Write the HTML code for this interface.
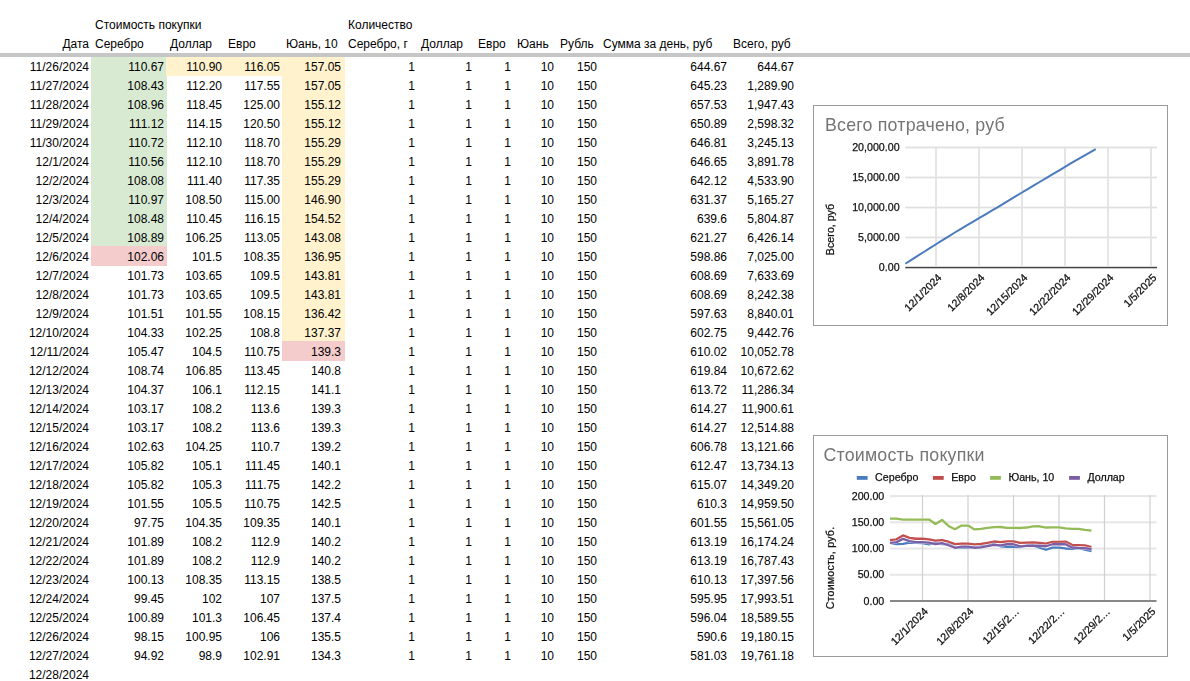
<!DOCTYPE html>
<html><head><meta charset="utf-8">
<style>
html,body{margin:0;padding:0;background:#fff;width:1190px;height:681px;overflow:hidden;position:relative}
body{font-family:"Liberation Sans",sans-serif;}
.b{position:absolute}
.t{position:absolute;font-size:12px;line-height:19px;color:#000;white-space:nowrap}
.r{text-align:right}
</style></head><body>
<div class="b" style="left:91px;top:57px;width:76px;height:190px;background:#d9ead3"></div>
<div class="b" style="left:91px;top:246px;width:76px;height:20px;background:#f4cccc"></div>
<div class="b" style="left:166px;top:57px;width:117px;height:19px;background:#fff2cc"></div>
<div class="b" style="left:282px;top:57px;width:63px;height:285px;background:#fff2cc"></div>
<div class="b" style="left:282px;top:341px;width:63px;height:20px;background:#f4cccc"></div>
<div class="b" style="left:0px;top:53px;width:1190px;height:4px;background:#c6c6c6"></div>
<div class="t" style="left:95px;top:16px">Стоимость покупки</div>
<div class="t" style="left:348px;top:16px">Количество</div>
<div class="t r" style="right:1101px;top:35px">Дата</div>
<div class="t" style="left:95px;top:35px">Серебро</div>
<div class="t" style="left:170px;top:35px">Доллар</div>
<div class="t" style="left:228px;top:35px">Евро</div>
<div class="t" style="left:286px;top:35px">Юань, 10</div>
<div class="t" style="left:348px;top:35px">Серебро, г</div>
<div class="t" style="left:421px;top:35px">Доллар</div>
<div class="t" style="left:478px;top:35px">Евро</div>
<div class="t" style="left:517px;top:35px">Юань</div>
<div class="t" style="left:560px;top:35px">Рубль</div>
<div class="t" style="left:603px;top:35px">Сумма за день, руб</div>
<div class="t" style="left:733px;top:35px">Всего, руб</div>
<div class="t r" style="right:1101px;top:58px">11/26/2024</div>
<div class="t r" style="right:1026px;top:58px">110.67</div>
<div class="t r" style="right:968px;top:58px">110.90</div>
<div class="t r" style="right:910px;top:58px">116.05</div>
<div class="t r" style="right:849px;top:58px">157.05</div>
<div class="t r" style="right:775px;top:58px">1</div>
<div class="t r" style="right:718px;top:58px">1</div>
<div class="t r" style="right:679px;top:58px">1</div>
<div class="t r" style="right:636px;top:58px">10</div>
<div class="t r" style="right:593px;top:58px">150</div>
<div class="t r" style="right:463px;top:58px">644.67</div>
<div class="t r" style="right:396px;top:58px">644.67</div>
<div class="t r" style="right:1101px;top:77px">11/27/2024</div>
<div class="t r" style="right:1026px;top:77px">108.43</div>
<div class="t r" style="right:968px;top:77px">112.20</div>
<div class="t r" style="right:910px;top:77px">117.55</div>
<div class="t r" style="right:849px;top:77px">157.05</div>
<div class="t r" style="right:775px;top:77px">1</div>
<div class="t r" style="right:718px;top:77px">1</div>
<div class="t r" style="right:679px;top:77px">1</div>
<div class="t r" style="right:636px;top:77px">10</div>
<div class="t r" style="right:593px;top:77px">150</div>
<div class="t r" style="right:463px;top:77px">645.23</div>
<div class="t r" style="right:396px;top:77px">1,289.90</div>
<div class="t r" style="right:1101px;top:96px">11/28/2024</div>
<div class="t r" style="right:1026px;top:96px">108.96</div>
<div class="t r" style="right:968px;top:96px">118.45</div>
<div class="t r" style="right:910px;top:96px">125.00</div>
<div class="t r" style="right:849px;top:96px">155.12</div>
<div class="t r" style="right:775px;top:96px">1</div>
<div class="t r" style="right:718px;top:96px">1</div>
<div class="t r" style="right:679px;top:96px">1</div>
<div class="t r" style="right:636px;top:96px">10</div>
<div class="t r" style="right:593px;top:96px">150</div>
<div class="t r" style="right:463px;top:96px">657.53</div>
<div class="t r" style="right:396px;top:96px">1,947.43</div>
<div class="t r" style="right:1101px;top:115px">11/29/2024</div>
<div class="t r" style="right:1026px;top:115px">111.12</div>
<div class="t r" style="right:968px;top:115px">114.15</div>
<div class="t r" style="right:910px;top:115px">120.50</div>
<div class="t r" style="right:849px;top:115px">155.12</div>
<div class="t r" style="right:775px;top:115px">1</div>
<div class="t r" style="right:718px;top:115px">1</div>
<div class="t r" style="right:679px;top:115px">1</div>
<div class="t r" style="right:636px;top:115px">10</div>
<div class="t r" style="right:593px;top:115px">150</div>
<div class="t r" style="right:463px;top:115px">650.89</div>
<div class="t r" style="right:396px;top:115px">2,598.32</div>
<div class="t r" style="right:1101px;top:134px">11/30/2024</div>
<div class="t r" style="right:1026px;top:134px">110.72</div>
<div class="t r" style="right:968px;top:134px">112.10</div>
<div class="t r" style="right:910px;top:134px">118.70</div>
<div class="t r" style="right:849px;top:134px">155.29</div>
<div class="t r" style="right:775px;top:134px">1</div>
<div class="t r" style="right:718px;top:134px">1</div>
<div class="t r" style="right:679px;top:134px">1</div>
<div class="t r" style="right:636px;top:134px">10</div>
<div class="t r" style="right:593px;top:134px">150</div>
<div class="t r" style="right:463px;top:134px">646.81</div>
<div class="t r" style="right:396px;top:134px">3,245.13</div>
<div class="t r" style="right:1101px;top:153px">12/1/2024</div>
<div class="t r" style="right:1026px;top:153px">110.56</div>
<div class="t r" style="right:968px;top:153px">112.10</div>
<div class="t r" style="right:910px;top:153px">118.70</div>
<div class="t r" style="right:849px;top:153px">155.29</div>
<div class="t r" style="right:775px;top:153px">1</div>
<div class="t r" style="right:718px;top:153px">1</div>
<div class="t r" style="right:679px;top:153px">1</div>
<div class="t r" style="right:636px;top:153px">10</div>
<div class="t r" style="right:593px;top:153px">150</div>
<div class="t r" style="right:463px;top:153px">646.65</div>
<div class="t r" style="right:396px;top:153px">3,891.78</div>
<div class="t r" style="right:1101px;top:172px">12/2/2024</div>
<div class="t r" style="right:1026px;top:172px">108.08</div>
<div class="t r" style="right:968px;top:172px">111.40</div>
<div class="t r" style="right:910px;top:172px">117.35</div>
<div class="t r" style="right:849px;top:172px">155.29</div>
<div class="t r" style="right:775px;top:172px">1</div>
<div class="t r" style="right:718px;top:172px">1</div>
<div class="t r" style="right:679px;top:172px">1</div>
<div class="t r" style="right:636px;top:172px">10</div>
<div class="t r" style="right:593px;top:172px">150</div>
<div class="t r" style="right:463px;top:172px">642.12</div>
<div class="t r" style="right:396px;top:172px">4,533.90</div>
<div class="t r" style="right:1101px;top:191px">12/3/2024</div>
<div class="t r" style="right:1026px;top:191px">110.97</div>
<div class="t r" style="right:968px;top:191px">108.50</div>
<div class="t r" style="right:910px;top:191px">115.00</div>
<div class="t r" style="right:849px;top:191px">146.90</div>
<div class="t r" style="right:775px;top:191px">1</div>
<div class="t r" style="right:718px;top:191px">1</div>
<div class="t r" style="right:679px;top:191px">1</div>
<div class="t r" style="right:636px;top:191px">10</div>
<div class="t r" style="right:593px;top:191px">150</div>
<div class="t r" style="right:463px;top:191px">631.37</div>
<div class="t r" style="right:396px;top:191px">5,165.27</div>
<div class="t r" style="right:1101px;top:210px">12/4/2024</div>
<div class="t r" style="right:1026px;top:210px">108.48</div>
<div class="t r" style="right:968px;top:210px">110.45</div>
<div class="t r" style="right:910px;top:210px">116.15</div>
<div class="t r" style="right:849px;top:210px">154.52</div>
<div class="t r" style="right:775px;top:210px">1</div>
<div class="t r" style="right:718px;top:210px">1</div>
<div class="t r" style="right:679px;top:210px">1</div>
<div class="t r" style="right:636px;top:210px">10</div>
<div class="t r" style="right:593px;top:210px">150</div>
<div class="t r" style="right:463px;top:210px">639.6</div>
<div class="t r" style="right:396px;top:210px">5,804.87</div>
<div class="t r" style="right:1101px;top:229px">12/5/2024</div>
<div class="t r" style="right:1026px;top:229px">108.89</div>
<div class="t r" style="right:968px;top:229px">106.25</div>
<div class="t r" style="right:910px;top:229px">113.05</div>
<div class="t r" style="right:849px;top:229px">143.08</div>
<div class="t r" style="right:775px;top:229px">1</div>
<div class="t r" style="right:718px;top:229px">1</div>
<div class="t r" style="right:679px;top:229px">1</div>
<div class="t r" style="right:636px;top:229px">10</div>
<div class="t r" style="right:593px;top:229px">150</div>
<div class="t r" style="right:463px;top:229px">621.27</div>
<div class="t r" style="right:396px;top:229px">6,426.14</div>
<div class="t r" style="right:1101px;top:248px">12/6/2024</div>
<div class="t r" style="right:1026px;top:248px">102.06</div>
<div class="t r" style="right:968px;top:248px">101.5</div>
<div class="t r" style="right:910px;top:248px">108.35</div>
<div class="t r" style="right:849px;top:248px">136.95</div>
<div class="t r" style="right:775px;top:248px">1</div>
<div class="t r" style="right:718px;top:248px">1</div>
<div class="t r" style="right:679px;top:248px">1</div>
<div class="t r" style="right:636px;top:248px">10</div>
<div class="t r" style="right:593px;top:248px">150</div>
<div class="t r" style="right:463px;top:248px">598.86</div>
<div class="t r" style="right:396px;top:248px">7,025.00</div>
<div class="t r" style="right:1101px;top:267px">12/7/2024</div>
<div class="t r" style="right:1026px;top:267px">101.73</div>
<div class="t r" style="right:968px;top:267px">103.65</div>
<div class="t r" style="right:910px;top:267px">109.5</div>
<div class="t r" style="right:849px;top:267px">143.81</div>
<div class="t r" style="right:775px;top:267px">1</div>
<div class="t r" style="right:718px;top:267px">1</div>
<div class="t r" style="right:679px;top:267px">1</div>
<div class="t r" style="right:636px;top:267px">10</div>
<div class="t r" style="right:593px;top:267px">150</div>
<div class="t r" style="right:463px;top:267px">608.69</div>
<div class="t r" style="right:396px;top:267px">7,633.69</div>
<div class="t r" style="right:1101px;top:286px">12/8/2024</div>
<div class="t r" style="right:1026px;top:286px">101.73</div>
<div class="t r" style="right:968px;top:286px">103.65</div>
<div class="t r" style="right:910px;top:286px">109.5</div>
<div class="t r" style="right:849px;top:286px">143.81</div>
<div class="t r" style="right:775px;top:286px">1</div>
<div class="t r" style="right:718px;top:286px">1</div>
<div class="t r" style="right:679px;top:286px">1</div>
<div class="t r" style="right:636px;top:286px">10</div>
<div class="t r" style="right:593px;top:286px">150</div>
<div class="t r" style="right:463px;top:286px">608.69</div>
<div class="t r" style="right:396px;top:286px">8,242.38</div>
<div class="t r" style="right:1101px;top:305px">12/9/2024</div>
<div class="t r" style="right:1026px;top:305px">101.51</div>
<div class="t r" style="right:968px;top:305px">101.55</div>
<div class="t r" style="right:910px;top:305px">108.15</div>
<div class="t r" style="right:849px;top:305px">136.42</div>
<div class="t r" style="right:775px;top:305px">1</div>
<div class="t r" style="right:718px;top:305px">1</div>
<div class="t r" style="right:679px;top:305px">1</div>
<div class="t r" style="right:636px;top:305px">10</div>
<div class="t r" style="right:593px;top:305px">150</div>
<div class="t r" style="right:463px;top:305px">597.63</div>
<div class="t r" style="right:396px;top:305px">8,840.01</div>
<div class="t r" style="right:1101px;top:324px">12/10/2024</div>
<div class="t r" style="right:1026px;top:324px">104.33</div>
<div class="t r" style="right:968px;top:324px">102.25</div>
<div class="t r" style="right:910px;top:324px">108.8</div>
<div class="t r" style="right:849px;top:324px">137.37</div>
<div class="t r" style="right:775px;top:324px">1</div>
<div class="t r" style="right:718px;top:324px">1</div>
<div class="t r" style="right:679px;top:324px">1</div>
<div class="t r" style="right:636px;top:324px">10</div>
<div class="t r" style="right:593px;top:324px">150</div>
<div class="t r" style="right:463px;top:324px">602.75</div>
<div class="t r" style="right:396px;top:324px">9,442.76</div>
<div class="t r" style="right:1101px;top:343px">12/11/2024</div>
<div class="t r" style="right:1026px;top:343px">105.47</div>
<div class="t r" style="right:968px;top:343px">104.5</div>
<div class="t r" style="right:910px;top:343px">110.75</div>
<div class="t r" style="right:849px;top:343px">139.3</div>
<div class="t r" style="right:775px;top:343px">1</div>
<div class="t r" style="right:718px;top:343px">1</div>
<div class="t r" style="right:679px;top:343px">1</div>
<div class="t r" style="right:636px;top:343px">10</div>
<div class="t r" style="right:593px;top:343px">150</div>
<div class="t r" style="right:463px;top:343px">610.02</div>
<div class="t r" style="right:396px;top:343px">10,052.78</div>
<div class="t r" style="right:1101px;top:362px">12/12/2024</div>
<div class="t r" style="right:1026px;top:362px">108.74</div>
<div class="t r" style="right:968px;top:362px">106.85</div>
<div class="t r" style="right:910px;top:362px">113.45</div>
<div class="t r" style="right:849px;top:362px">140.8</div>
<div class="t r" style="right:775px;top:362px">1</div>
<div class="t r" style="right:718px;top:362px">1</div>
<div class="t r" style="right:679px;top:362px">1</div>
<div class="t r" style="right:636px;top:362px">10</div>
<div class="t r" style="right:593px;top:362px">150</div>
<div class="t r" style="right:463px;top:362px">619.84</div>
<div class="t r" style="right:396px;top:362px">10,672.62</div>
<div class="t r" style="right:1101px;top:381px">12/13/2024</div>
<div class="t r" style="right:1026px;top:381px">104.37</div>
<div class="t r" style="right:968px;top:381px">106.1</div>
<div class="t r" style="right:910px;top:381px">112.15</div>
<div class="t r" style="right:849px;top:381px">141.1</div>
<div class="t r" style="right:775px;top:381px">1</div>
<div class="t r" style="right:718px;top:381px">1</div>
<div class="t r" style="right:679px;top:381px">1</div>
<div class="t r" style="right:636px;top:381px">10</div>
<div class="t r" style="right:593px;top:381px">150</div>
<div class="t r" style="right:463px;top:381px">613.72</div>
<div class="t r" style="right:396px;top:381px">11,286.34</div>
<div class="t r" style="right:1101px;top:400px">12/14/2024</div>
<div class="t r" style="right:1026px;top:400px">103.17</div>
<div class="t r" style="right:968px;top:400px">108.2</div>
<div class="t r" style="right:910px;top:400px">113.6</div>
<div class="t r" style="right:849px;top:400px">139.3</div>
<div class="t r" style="right:775px;top:400px">1</div>
<div class="t r" style="right:718px;top:400px">1</div>
<div class="t r" style="right:679px;top:400px">1</div>
<div class="t r" style="right:636px;top:400px">10</div>
<div class="t r" style="right:593px;top:400px">150</div>
<div class="t r" style="right:463px;top:400px">614.27</div>
<div class="t r" style="right:396px;top:400px">11,900.61</div>
<div class="t r" style="right:1101px;top:419px">12/15/2024</div>
<div class="t r" style="right:1026px;top:419px">103.17</div>
<div class="t r" style="right:968px;top:419px">108.2</div>
<div class="t r" style="right:910px;top:419px">113.6</div>
<div class="t r" style="right:849px;top:419px">139.3</div>
<div class="t r" style="right:775px;top:419px">1</div>
<div class="t r" style="right:718px;top:419px">1</div>
<div class="t r" style="right:679px;top:419px">1</div>
<div class="t r" style="right:636px;top:419px">10</div>
<div class="t r" style="right:593px;top:419px">150</div>
<div class="t r" style="right:463px;top:419px">614.27</div>
<div class="t r" style="right:396px;top:419px">12,514.88</div>
<div class="t r" style="right:1101px;top:438px">12/16/2024</div>
<div class="t r" style="right:1026px;top:438px">102.63</div>
<div class="t r" style="right:968px;top:438px">104.25</div>
<div class="t r" style="right:910px;top:438px">110.7</div>
<div class="t r" style="right:849px;top:438px">139.2</div>
<div class="t r" style="right:775px;top:438px">1</div>
<div class="t r" style="right:718px;top:438px">1</div>
<div class="t r" style="right:679px;top:438px">1</div>
<div class="t r" style="right:636px;top:438px">10</div>
<div class="t r" style="right:593px;top:438px">150</div>
<div class="t r" style="right:463px;top:438px">606.78</div>
<div class="t r" style="right:396px;top:438px">13,121.66</div>
<div class="t r" style="right:1101px;top:457px">12/17/2024</div>
<div class="t r" style="right:1026px;top:457px">105.82</div>
<div class="t r" style="right:968px;top:457px">105.1</div>
<div class="t r" style="right:910px;top:457px">111.45</div>
<div class="t r" style="right:849px;top:457px">140.1</div>
<div class="t r" style="right:775px;top:457px">1</div>
<div class="t r" style="right:718px;top:457px">1</div>
<div class="t r" style="right:679px;top:457px">1</div>
<div class="t r" style="right:636px;top:457px">10</div>
<div class="t r" style="right:593px;top:457px">150</div>
<div class="t r" style="right:463px;top:457px">612.47</div>
<div class="t r" style="right:396px;top:457px">13,734.13</div>
<div class="t r" style="right:1101px;top:476px">12/18/2024</div>
<div class="t r" style="right:1026px;top:476px">105.82</div>
<div class="t r" style="right:968px;top:476px">105.3</div>
<div class="t r" style="right:910px;top:476px">111.75</div>
<div class="t r" style="right:849px;top:476px">142.2</div>
<div class="t r" style="right:775px;top:476px">1</div>
<div class="t r" style="right:718px;top:476px">1</div>
<div class="t r" style="right:679px;top:476px">1</div>
<div class="t r" style="right:636px;top:476px">10</div>
<div class="t r" style="right:593px;top:476px">150</div>
<div class="t r" style="right:463px;top:476px">615.07</div>
<div class="t r" style="right:396px;top:476px">14,349.20</div>
<div class="t r" style="right:1101px;top:495px">12/19/2024</div>
<div class="t r" style="right:1026px;top:495px">101.55</div>
<div class="t r" style="right:968px;top:495px">105.5</div>
<div class="t r" style="right:910px;top:495px">110.75</div>
<div class="t r" style="right:849px;top:495px">142.5</div>
<div class="t r" style="right:775px;top:495px">1</div>
<div class="t r" style="right:718px;top:495px">1</div>
<div class="t r" style="right:679px;top:495px">1</div>
<div class="t r" style="right:636px;top:495px">10</div>
<div class="t r" style="right:593px;top:495px">150</div>
<div class="t r" style="right:463px;top:495px">610.3</div>
<div class="t r" style="right:396px;top:495px">14,959.50</div>
<div class="t r" style="right:1101px;top:514px">12/20/2024</div>
<div class="t r" style="right:1026px;top:514px">97.75</div>
<div class="t r" style="right:968px;top:514px">104.35</div>
<div class="t r" style="right:910px;top:514px">109.35</div>
<div class="t r" style="right:849px;top:514px">140.1</div>
<div class="t r" style="right:775px;top:514px">1</div>
<div class="t r" style="right:718px;top:514px">1</div>
<div class="t r" style="right:679px;top:514px">1</div>
<div class="t r" style="right:636px;top:514px">10</div>
<div class="t r" style="right:593px;top:514px">150</div>
<div class="t r" style="right:463px;top:514px">601.55</div>
<div class="t r" style="right:396px;top:514px">15,561.05</div>
<div class="t r" style="right:1101px;top:533px">12/21/2024</div>
<div class="t r" style="right:1026px;top:533px">101.89</div>
<div class="t r" style="right:968px;top:533px">108.2</div>
<div class="t r" style="right:910px;top:533px">112.9</div>
<div class="t r" style="right:849px;top:533px">140.2</div>
<div class="t r" style="right:775px;top:533px">1</div>
<div class="t r" style="right:718px;top:533px">1</div>
<div class="t r" style="right:679px;top:533px">1</div>
<div class="t r" style="right:636px;top:533px">10</div>
<div class="t r" style="right:593px;top:533px">150</div>
<div class="t r" style="right:463px;top:533px">613.19</div>
<div class="t r" style="right:396px;top:533px">16,174.24</div>
<div class="t r" style="right:1101px;top:552px">12/22/2024</div>
<div class="t r" style="right:1026px;top:552px">101.89</div>
<div class="t r" style="right:968px;top:552px">108.2</div>
<div class="t r" style="right:910px;top:552px">112.9</div>
<div class="t r" style="right:849px;top:552px">140.2</div>
<div class="t r" style="right:775px;top:552px">1</div>
<div class="t r" style="right:718px;top:552px">1</div>
<div class="t r" style="right:679px;top:552px">1</div>
<div class="t r" style="right:636px;top:552px">10</div>
<div class="t r" style="right:593px;top:552px">150</div>
<div class="t r" style="right:463px;top:552px">613.19</div>
<div class="t r" style="right:396px;top:552px">16,787.43</div>
<div class="t r" style="right:1101px;top:571px">12/23/2024</div>
<div class="t r" style="right:1026px;top:571px">100.13</div>
<div class="t r" style="right:968px;top:571px">108.35</div>
<div class="t r" style="right:910px;top:571px">113.15</div>
<div class="t r" style="right:849px;top:571px">138.5</div>
<div class="t r" style="right:775px;top:571px">1</div>
<div class="t r" style="right:718px;top:571px">1</div>
<div class="t r" style="right:679px;top:571px">1</div>
<div class="t r" style="right:636px;top:571px">10</div>
<div class="t r" style="right:593px;top:571px">150</div>
<div class="t r" style="right:463px;top:571px">610.13</div>
<div class="t r" style="right:396px;top:571px">17,397.56</div>
<div class="t r" style="right:1101px;top:590px">12/24/2024</div>
<div class="t r" style="right:1026px;top:590px">99.45</div>
<div class="t r" style="right:968px;top:590px">102</div>
<div class="t r" style="right:910px;top:590px">107</div>
<div class="t r" style="right:849px;top:590px">137.5</div>
<div class="t r" style="right:775px;top:590px">1</div>
<div class="t r" style="right:718px;top:590px">1</div>
<div class="t r" style="right:679px;top:590px">1</div>
<div class="t r" style="right:636px;top:590px">10</div>
<div class="t r" style="right:593px;top:590px">150</div>
<div class="t r" style="right:463px;top:590px">595.95</div>
<div class="t r" style="right:396px;top:590px">17,993.51</div>
<div class="t r" style="right:1101px;top:609px">12/25/2024</div>
<div class="t r" style="right:1026px;top:609px">100.89</div>
<div class="t r" style="right:968px;top:609px">101.3</div>
<div class="t r" style="right:910px;top:609px">106.45</div>
<div class="t r" style="right:849px;top:609px">137.4</div>
<div class="t r" style="right:775px;top:609px">1</div>
<div class="t r" style="right:718px;top:609px">1</div>
<div class="t r" style="right:679px;top:609px">1</div>
<div class="t r" style="right:636px;top:609px">10</div>
<div class="t r" style="right:593px;top:609px">150</div>
<div class="t r" style="right:463px;top:609px">596.04</div>
<div class="t r" style="right:396px;top:609px">18,589.55</div>
<div class="t r" style="right:1101px;top:628px">12/26/2024</div>
<div class="t r" style="right:1026px;top:628px">98.15</div>
<div class="t r" style="right:968px;top:628px">100.95</div>
<div class="t r" style="right:910px;top:628px">106</div>
<div class="t r" style="right:849px;top:628px">135.5</div>
<div class="t r" style="right:775px;top:628px">1</div>
<div class="t r" style="right:718px;top:628px">1</div>
<div class="t r" style="right:679px;top:628px">1</div>
<div class="t r" style="right:636px;top:628px">10</div>
<div class="t r" style="right:593px;top:628px">150</div>
<div class="t r" style="right:463px;top:628px">590.6</div>
<div class="t r" style="right:396px;top:628px">19,180.15</div>
<div class="t r" style="right:1101px;top:647px">12/27/2024</div>
<div class="t r" style="right:1026px;top:647px">94.92</div>
<div class="t r" style="right:968px;top:647px">98.9</div>
<div class="t r" style="right:910px;top:647px">102.91</div>
<div class="t r" style="right:849px;top:647px">134.3</div>
<div class="t r" style="right:775px;top:647px">1</div>
<div class="t r" style="right:718px;top:647px">1</div>
<div class="t r" style="right:679px;top:647px">1</div>
<div class="t r" style="right:636px;top:647px">10</div>
<div class="t r" style="right:593px;top:647px">150</div>
<div class="t r" style="right:463px;top:647px">581.03</div>
<div class="t r" style="right:396px;top:647px">19,761.18</div>
<div class="t r" style="right:1101px;top:666px">12/28/2024</div>
<svg style="position:absolute;left:0;top:0;will-change:transform" width="1190" height="681" font-family="Liberation Sans, sans-serif"><rect x="813.5" y="105.5" width="354" height="220" fill="#fff" stroke="#9a9a9a" stroke-width="1"/>
<text x="825" y="131" font-size="17.8" letter-spacing="0.2" fill="#757575">Всего потрачено, руб</text>
<rect x="905.3" y="146.60" width="251.70" height="1.8" fill="#e0e0e0"/>
<rect x="905.3" y="176.60" width="251.70" height="1.8" fill="#e0e0e0"/>
<rect x="905.3" y="206.60" width="251.70" height="1.8" fill="#e0e0e0"/>
<rect x="905.3" y="236.60" width="251.70" height="1.8" fill="#e0e0e0"/>
<rect x="935.10" y="146.6" width="1.8" height="119.10" fill="#e3e3e3"/>
<rect x="978.10" y="146.6" width="1.8" height="119.10" fill="#e3e3e3"/>
<rect x="1021.10" y="146.6" width="1.8" height="119.10" fill="#e3e3e3"/>
<rect x="1064.10" y="146.6" width="1.8" height="119.10" fill="#e3e3e3"/>
<rect x="1107.10" y="146.6" width="1.8" height="119.10" fill="#e3e3e3"/>
<rect x="1150.10" y="146.6" width="1.8" height="119.10" fill="#e3e3e3"/>
<rect x="905.3" y="266.80" width="251.70" height="1.5" fill="#444"/>
<text x="899.6" y="151.10" font-size="10.67" fill="#111" stroke="#111" stroke-width="0.25" text-anchor="end">20,000.00</text>
<text x="899.6" y="181.10" font-size="10.67" fill="#111" stroke="#111" stroke-width="0.25" text-anchor="end">15,000.00</text>
<text x="899.6" y="211.10" font-size="10.67" fill="#111" stroke="#111" stroke-width="0.25" text-anchor="end">10,000.00</text>
<text x="899.6" y="241.10" font-size="10.67" fill="#111" stroke="#111" stroke-width="0.25" text-anchor="end">5,000.00</text>
<text x="899.6" y="271.10" font-size="10.67" fill="#111" stroke="#111" stroke-width="0.25" text-anchor="end">0.00</text>
<text x="942.30" y="278.40" font-size="10.67" fill="#111" stroke="#111" stroke-width="0.25" text-anchor="end" transform="rotate(-45 942.30 278.40)">12/1/2024</text>
<text x="985.30" y="278.40" font-size="10.67" fill="#111" stroke="#111" stroke-width="0.25" text-anchor="end" transform="rotate(-45 985.30 278.40)">12/8/2024</text>
<text x="1028.30" y="278.40" font-size="10.67" fill="#111" stroke="#111" stroke-width="0.25" text-anchor="end" transform="rotate(-45 1028.30 278.40)">12/15/2024</text>
<text x="1071.30" y="278.40" font-size="10.67" fill="#111" stroke="#111" stroke-width="0.25" text-anchor="end" transform="rotate(-45 1071.30 278.40)">12/22/2024</text>
<text x="1114.30" y="278.40" font-size="10.67" fill="#111" stroke="#111" stroke-width="0.25" text-anchor="end" transform="rotate(-45 1114.30 278.40)">12/29/2024</text>
<text x="1157.30" y="278.40" font-size="10.67" fill="#111" stroke="#111" stroke-width="0.25" text-anchor="end" transform="rotate(-45 1157.30 278.40)">1/5/2025</text>
<text x="834" y="229.5" font-size="10.67" fill="#111" stroke="#111" stroke-width="0.25" text-anchor="middle" transform="rotate(-90 834 229.5)">Всего, руб</text>
<polyline points="905.30,263.73 911.44,259.86 917.59,255.92 923.73,252.01 929.87,248.13 936.01,244.25 942.16,240.40 948.30,236.61 954.44,232.77 960.59,229.04 966.73,225.45 972.87,221.80 979.01,218.15 985.16,214.56 991.30,210.94 997.44,207.28 1003.59,203.56 1009.73,199.88 1015.87,196.20 1022.01,192.51 1028.16,188.87 1034.30,185.20 1040.44,181.50 1046.59,177.84 1052.73,174.23 1058.87,170.55 1065.01,166.88 1071.16,163.21 1077.30,159.64 1083.44,156.06 1089.59,152.52 1095.73,149.03" fill="none" stroke="#4b7bbe" stroke-width="2" stroke-linejoin="round"/>
<rect x="813.5" y="435.5" width="354" height="221" fill="#fff" stroke="#9a9a9a" stroke-width="1"/>
<text x="823.5" y="461" font-size="17.8" letter-spacing="0.2" fill="#757575">Стоимость покупки</text>
<rect x="890.0" y="495.10" width="266.50" height="2" fill="#e6e6e6"/>
<rect x="890.0" y="521.33" width="266.50" height="2" fill="#e6e6e6"/>
<rect x="890.0" y="547.55" width="266.50" height="2" fill="#e6e6e6"/>
<rect x="890.0" y="573.77" width="266.50" height="2" fill="#e6e6e6"/>
<rect x="921.90" y="495.1" width="1.2" height="104.90" fill="#d0d0d0"/>
<rect x="967.40" y="495.1" width="1.2" height="104.90" fill="#d0d0d0"/>
<rect x="1012.90" y="495.1" width="1.2" height="104.90" fill="#d0d0d0"/>
<rect x="1058.40" y="495.1" width="1.2" height="104.90" fill="#d0d0d0"/>
<rect x="1103.90" y="495.1" width="1.2" height="104.90" fill="#d0d0d0"/>
<rect x="1149.40" y="495.1" width="1.2" height="104.90" fill="#d0d0d0"/>
<rect x="890.0" y="600.00" width="266.50" height="2" fill="#888"/>
<text x="884.3" y="499.70" font-size="10.67" fill="#111" stroke="#111" stroke-width="0.25" text-anchor="end">200.00</text>
<text x="884.3" y="525.93" font-size="10.67" fill="#111" stroke="#111" stroke-width="0.25" text-anchor="end">150.00</text>
<text x="884.3" y="552.15" font-size="10.67" fill="#111" stroke="#111" stroke-width="0.25" text-anchor="end">100.00</text>
<text x="884.3" y="578.38" font-size="10.67" fill="#111" stroke="#111" stroke-width="0.25" text-anchor="end">50.00</text>
<text x="884.3" y="604.60" font-size="10.67" fill="#111" stroke="#111" stroke-width="0.25" text-anchor="end">0.00</text>
<text x="928.70" y="612.10" font-size="10.67" fill="#111" stroke="#111" stroke-width="0.25" text-anchor="end" transform="rotate(-45 928.70 612.10)">12/1/2024</text>
<text x="974.20" y="612.10" font-size="10.67" fill="#111" stroke="#111" stroke-width="0.25" text-anchor="end" transform="rotate(-45 974.20 612.10)">12/8/2024</text>
<text x="1019.70" y="612.10" font-size="10.67" fill="#111" stroke="#111" stroke-width="0.25" text-anchor="end" transform="rotate(-45 1019.70 612.10)">12/15/2…</text>
<text x="1065.20" y="612.10" font-size="10.67" fill="#111" stroke="#111" stroke-width="0.25" text-anchor="end" transform="rotate(-45 1065.20 612.10)">12/22/2…</text>
<text x="1110.70" y="612.10" font-size="10.67" fill="#111" stroke="#111" stroke-width="0.25" text-anchor="end" transform="rotate(-45 1110.70 612.10)">12/29/2…</text>
<text x="1156.20" y="612.10" font-size="10.67" fill="#111" stroke="#111" stroke-width="0.25" text-anchor="end" transform="rotate(-45 1156.20 612.10)">1/5/2025</text>
<text x="834" y="568" font-size="10.67" letter-spacing="0.2" fill="#111" stroke="#111" stroke-width="0.25" text-anchor="middle" transform="rotate(-90 834 568)">Стоимость, руб.</text>
<rect x="856.8" y="476" width="10.8" height="3.8" fill="#4b7cbe"/>
<text x="875.10" y="481.2" font-size="10.67" fill="#111" stroke="#111" stroke-width="0.25">Серебро</text>
<rect x="932.9" y="476" width="10.8" height="3.8" fill="#bf4b4b"/>
<text x="951.20" y="481.2" font-size="10.67" fill="#111" stroke="#111" stroke-width="0.25">Евро</text>
<rect x="990.1" y="476" width="10.8" height="3.8" fill="#94bb57"/>
<text x="1008.40" y="481.2" font-size="10.67" fill="#111" stroke="#111" stroke-width="0.25">Юань, 10</text>
<rect x="1069.1" y="476" width="10.8" height="3.8" fill="#7b5da3"/>
<text x="1087.40" y="481.2" font-size="10.67" fill="#111" stroke="#111" stroke-width="0.25">Доллар</text>
<polyline points="890.00,542.95 896.50,544.13 903.00,543.85 909.50,542.72 916.00,542.93 922.50,543.01 929.00,544.31 935.50,542.80 942.00,544.10 948.50,543.89 955.00,547.47 961.50,547.64 968.00,547.64 974.50,547.76 981.00,546.28 987.50,545.68 994.00,543.97 1000.50,546.26 1007.00,546.89 1013.50,546.89 1020.00,547.17 1026.50,545.50 1033.00,545.50 1039.50,547.74 1046.00,549.73 1052.50,547.56 1059.00,547.56 1065.50,548.48 1072.00,548.84 1078.50,548.08 1085.00,549.52 1091.50,551.21" fill="none" stroke="#fff" stroke-width="3.2" stroke-linejoin="round" opacity="0.6"/>
<polyline points="890.00,542.95 896.50,544.13 903.00,543.85 909.50,542.72 916.00,542.93 922.50,543.01 929.00,544.31 935.50,542.80 942.00,544.10 948.50,543.89 955.00,547.47 961.50,547.64 968.00,547.64 974.50,547.76 981.00,546.28 987.50,545.68 994.00,543.97 1000.50,546.26 1007.00,546.89 1013.50,546.89 1020.00,547.17 1026.50,545.50 1033.00,545.50 1039.50,547.74 1046.00,549.73 1052.50,547.56 1059.00,547.56 1065.50,548.48 1072.00,548.84 1078.50,548.08 1085.00,549.52 1091.50,551.21" fill="none" stroke="#4b7cbe" stroke-width="2.3" stroke-linejoin="round"/>
<polyline points="890.00,540.13 896.50,539.35 903.00,535.44 909.50,537.80 916.00,538.74 922.50,538.74 929.00,539.45 935.50,540.68 942.00,540.08 948.50,541.71 955.00,544.17 961.50,543.57 968.00,543.57 974.50,544.28 981.00,543.93 987.50,542.91 994.00,541.50 1000.50,542.18 1007.00,541.42 1013.50,541.42 1020.00,542.94 1026.50,542.54 1033.00,542.39 1039.50,542.91 1046.00,543.65 1052.50,541.78 1059.00,541.78 1065.50,541.65 1072.00,544.88 1078.50,545.17 1085.00,545.40 1091.50,547.02" fill="none" stroke="#fff" stroke-width="3.2" stroke-linejoin="round" opacity="0.6"/>
<polyline points="890.00,540.13 896.50,539.35 903.00,535.44 909.50,537.80 916.00,538.74 922.50,538.74 929.00,539.45 935.50,540.68 942.00,540.08 948.50,541.71 955.00,544.17 961.50,543.57 968.00,543.57 974.50,544.28 981.00,543.93 987.50,542.91 994.00,541.50 1000.50,542.18 1007.00,541.42 1013.50,541.42 1020.00,542.94 1026.50,542.54 1033.00,542.39 1039.50,542.91 1046.00,543.65 1052.50,541.78 1059.00,541.78 1065.50,541.65 1072.00,544.88 1078.50,545.17 1085.00,545.40 1091.50,547.02" fill="none" stroke="#c24e4e" stroke-width="2.3" stroke-linejoin="round"/>
<polyline points="890.00,518.63 896.50,518.63 903.00,519.64 909.50,519.64 916.00,519.55 922.50,519.55 929.00,519.55 935.50,523.95 942.00,519.95 948.50,525.95 955.00,529.17 961.50,525.57 968.00,525.57 974.50,529.45 981.00,528.95 987.50,527.94 994.00,527.15 1000.50,526.99 1007.00,527.94 1013.50,527.94 1020.00,527.99 1026.50,527.52 1033.00,526.42 1039.50,526.26 1046.00,527.52 1052.50,527.47 1059.00,527.47 1065.50,528.36 1072.00,528.88 1078.50,528.93 1085.00,529.93 1091.50,530.56" fill="none" stroke="#fff" stroke-width="3.2" stroke-linejoin="round" opacity="0.6"/>
<polyline points="890.00,518.63 896.50,518.63 903.00,519.64 909.50,519.64 916.00,519.55 922.50,519.55 929.00,519.55 935.50,523.95 942.00,519.95 948.50,525.95 955.00,529.17 961.50,525.57 968.00,525.57 974.50,529.45 981.00,528.95 987.50,527.94 994.00,527.15 1000.50,526.99 1007.00,527.94 1013.50,527.94 1020.00,527.99 1026.50,527.52 1033.00,526.42 1039.50,526.26 1046.00,527.52 1052.50,527.47 1059.00,527.47 1065.50,528.36 1072.00,528.88 1078.50,528.93 1085.00,529.93 1091.50,530.56" fill="none" stroke="#94bb57" stroke-width="2.3" stroke-linejoin="round"/>
<polyline points="890.00,542.83 896.50,542.15 903.00,538.87 909.50,541.13 916.00,542.20 922.50,542.20 929.00,542.57 935.50,544.09 942.00,543.07 948.50,545.27 955.00,547.76 961.50,546.64 968.00,546.64 974.50,547.74 981.00,547.37 987.50,546.19 994.00,544.96 1000.50,545.35 1007.00,544.25 1013.50,544.25 1020.00,546.32 1026.50,545.88 1033.00,545.77 1039.50,545.67 1046.00,546.27 1052.50,544.25 1059.00,544.25 1065.50,544.17 1072.00,547.50 1078.50,547.87 1085.00,548.05 1091.50,549.13" fill="none" stroke="#fff" stroke-width="3.2" stroke-linejoin="round" opacity="0.6"/>
<polyline points="890.00,542.83 896.50,542.15 903.00,538.87 909.50,541.13 916.00,542.20 922.50,542.20 929.00,542.57 935.50,544.09 942.00,543.07 948.50,545.27 955.00,547.76 961.50,546.64 968.00,546.64 974.50,547.74 981.00,547.37 987.50,546.19 994.00,544.96 1000.50,545.35 1007.00,544.25 1013.50,544.25 1020.00,546.32 1026.50,545.88 1033.00,545.77 1039.50,545.67 1046.00,546.27 1052.50,544.25 1059.00,544.25 1065.50,544.17 1072.00,547.50 1078.50,547.87 1085.00,548.05 1091.50,549.13" fill="none" stroke="#7d5fa6" stroke-width="2.3" stroke-linejoin="round"/></svg>
</body></html>
